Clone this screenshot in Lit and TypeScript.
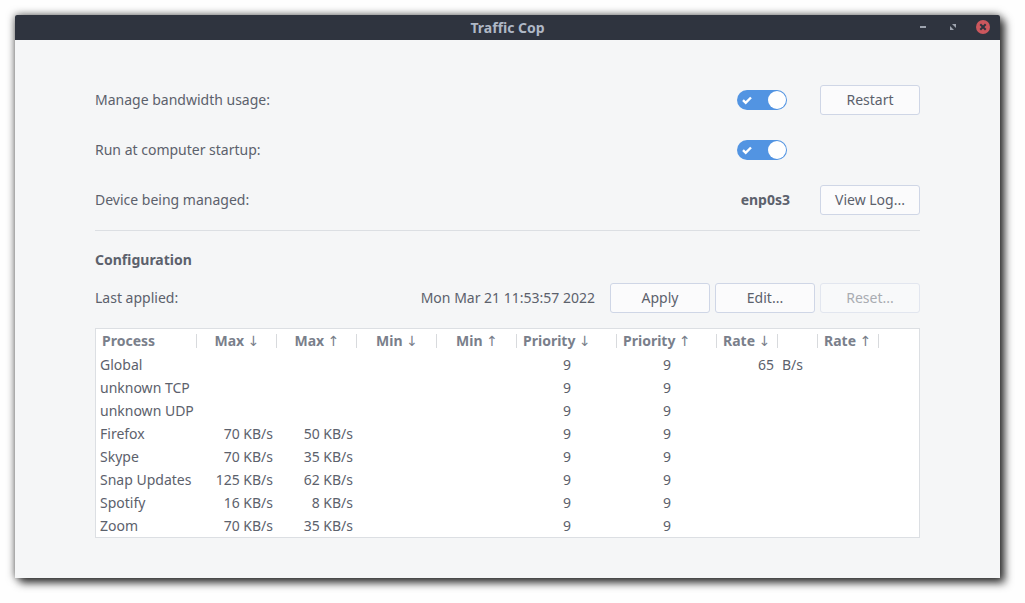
import { LitElement, html, css } from "lit";
import { customElement, property } from "lit/decorators.js";

interface ProcessRow {
  name: string;
  maxDown?: string;
  maxUp?: string;
  minDown?: string;
  minUp?: string;
  priorityDown: number;
  priorityUp: number;
  rateDown?: string;
  rateDownUnit?: string;
  rateUp?: string;
  rateUpUnit?: string;
}

const ROWS: ProcessRow[] = [
  { name: "Global", priorityDown: 9, priorityUp: 9, rateDown: "65", rateDownUnit: "B/s" },
  { name: "unknown TCP", priorityDown: 9, priorityUp: 9 },
  { name: "unknown UDP", priorityDown: 9, priorityUp: 9 },
  { name: "Firefox", maxDown: "70 KB/s", maxUp: "50 KB/s", priorityDown: 9, priorityUp: 9 },
  { name: "Skype", maxDown: "70 KB/s", maxUp: "35 KB/s", priorityDown: 9, priorityUp: 9 },
  { name: "Snap Updates", maxDown: "125 KB/s", maxUp: "62 KB/s", priorityDown: 9, priorityUp: 9 },
  { name: "Spotify", maxDown: "16 KB/s", maxUp: "8 KB/s", priorityDown: 9, priorityUp: 9 },
  { name: "Zoom", maxDown: "70 KB/s", maxUp: "35 KB/s", priorityDown: 9, priorityUp: 9 },
];

const DOWN = html`<span class="arrow">↓</span>`;
const UP = html`<span class="arrow">↑</span>`;

@customElement("title-bar")
export class TitleBar extends LitElement {
  @property() heading = "";

  static styles = css`
    :host {
      display: grid;
      grid-template-columns: 1fr auto 1fr;
      align-items: center;
      box-sizing: border-box;
      height: 25px;
      padding: 0 10px 1px;
      background: #2f343f;
      color: #afb8c6;
      border-radius: 2px 2px 0 0;
    }
    .heading {
      grid-column: 2;
      margin: 0;
      padding-top: 2px;
      font-size: 14px;
      line-height: 20px;
      font-weight: 700;
    }
    .controls {
      display: flex;
      justify-content: flex-end;
      gap: 16px;
    }
    .control {
      display: block;
      width: 14px;
      height: 14px;
      padding: 0;
      border: 0;
      background: none;
    }
    .control svg {
      display: block;
    }
  `;

  render() {
    return html`
      <h1 class="heading">${this.heading}</h1>
      <div class="controls">
        <button class="control" type="button" aria-label="Minimize">
          <svg width="14" height="14" viewBox="0 0 14 14"><path d="M4 6h6v2H4z" fill="#9da3ae" /></svg>
        </button>
        <button class="control" type="button" aria-label="Maximize">
          <svg width="14" height="14" viewBox="0 0 14 14">
            <path d="M6 4h4v4zM4 6l4 4H4z" fill="#9da3ae" />
          </svg>
        </button>
        <button class="control" type="button" aria-label="Close">
          <svg width="14" height="14" viewBox="0 0 14 14">
            <circle cx="7" cy="7" r="7" fill="#cc575d" />
            <path d="M4.3 4.3l5.4 5.4M9.7 4.3l-5.4 5.4" stroke="#2f343f" stroke-width="2" />
          </svg>
        </button>
      </div>
    `;
  }
}

@customElement("process-table")
export class ProcessTable extends LitElement {
  @property({ attribute: false }) rows: ProcessRow[] = [];

  static styles = css`
    :host {
      display: block;
      background: #ffffff;
      border: 1px solid #dcdfe3;
    }
    .grid {
      width: 100%;
      table-layout: fixed;
      border-collapse: collapse;
    }
    .col-name {
      width: 101px;
    }
    .col-limit {
      width: 80px;
    }
    .col-priority {
      width: 100px;
    }
    .col-rate {
      width: 61px;
    }
    .col-unit {
      width: 40px;
    }
    th {
      height: 24px;
      padding: 0 6px;
      font-weight: 700;
      line-height: 20px;
      color: #7a7f8b;
      text-align: center;
      white-space: nowrap;
      background: linear-gradient(#d8dadd, #d8dadd) right center / 1px 14px no-repeat;
    }
    td {
      height: 23px;
      padding: 0 4px;
      line-height: 20px;
      text-align: right;
      white-space: nowrap;
    }
    .arrow {
      font-family: "DejaVu Sans", sans-serif;
      font-weight: 400;
      line-height: 1;
    }
    .start {
      text-align: left;
    }
    .center {
      text-align: center;
    }
    .filler {
      background: none;
    }
  `;

  render() {
    return html`
      <table class="grid">
        <colgroup>
          <col class="col-name" />
          <col class="col-limit" />
          <col class="col-limit" />
          <col class="col-limit" />
          <col class="col-limit" />
          <col class="col-priority" />
          <col class="col-priority" />
          <col class="col-rate" />
          <col class="col-unit" />
          <col class="col-rate" />
          <col />
        </colgroup>
        <thead>
          <tr>
            <th class="start" scope="col">Process</th>
            <th scope="col">Max ${DOWN}</th>
            <th scope="col">Max ${UP}</th>
            <th scope="col">Min ${DOWN}</th>
            <th scope="col">Min ${UP}</th>
            <th class="start" scope="col">Priority ${DOWN}</th>
            <th class="start" scope="col">Priority ${UP}</th>
            <th class="start" scope="col">Rate ${DOWN}</th>
            <th></th>
            <th class="start" scope="col">Rate ${UP}</th>
            <th class="filler"></th>
          </tr>
        </thead>
        <tbody>
          ${this.rows.map(
            (row) => html`
              <tr>
                <td class="start">${row.name}</td>
                <td>${row.maxDown}</td>
                <td>${row.maxUp}</td>
                <td>${row.minDown}</td>
                <td>${row.minUp}</td>
                <td class="center">${row.priorityDown}</td>
                <td class="center">${row.priorityUp}</td>
                <td>${row.rateDown}</td>
                <td class="start">${row.rateDownUnit}</td>
                <td>${row.rateUp}</td>
                <td class="start">${row.rateUpUnit}</td>
              </tr>
            `,
          )}
        </tbody>
      </table>
    `;
  }
}

@customElement("app-root")
export class AppRoot extends LitElement {
  static styles = css`
    :host {
      display: block;
      box-sizing: border-box;
      min-height: 100vh;
      padding: 15px 25px 25px 15px;
      background: #fefefe;
      color: #5c616c;
      font-family: "Noto Sans", "Open Sans", sans-serif;
      font-size: 14px;
      line-height: 20px;
    }
    .window {
      background: #f5f6f7;
      border-radius: 2px 2px 0 0;
      box-shadow:
        5px 5px 8px rgba(0, 0, 0, 0.7),
        0 0 8px rgba(0, 0, 0, 0.6);
    }
    .content {
      padding: 45px 80px 40px;
    }
    .settings {
      display: grid;
      grid-template-columns: 1fr 56px 100px;
      grid-auto-rows: 30px;
      align-items: center;
      gap: 20px 30px;
      padding-bottom: 15px;
      border-bottom: 1px solid #dcdfe3;
    }
    .settings .button {
      grid-column: 3;
    }
    .label {
      grid-column: 1;
    }
    .device {
      justify-self: end;
      font-weight: 700;
    }
    .switch {
      position: relative;
      justify-self: center;
      width: 50px;
      height: 20px;
    }
    .toggle {
      appearance: none;
      display: block;
      width: 50px;
      height: 20px;
      margin: 0;
      border-radius: 10px;
      background: #b8bdc7;
    }
    .toggle::before {
      content: "";
      display: block;
      width: 18px;
      height: 18px;
      margin: 1px;
      border-radius: 50%;
      background: #ffffff;
    }
    .toggle:checked {
      display: flex;
      justify-content: flex-end;
      background: #5294e2;
    }
    .tick {
      position: absolute;
      left: 5px;
      top: 5px;
      pointer-events: none;
    }
    .button {
      box-sizing: border-box;
      width: 100px;
      height: 30px;
      padding: 0;
      border: 1px solid #cfd6e6;
      border-radius: 3px;
      background: #fbfbfc;
      color: inherit;
      font: inherit;
    }
    .button:disabled {
      border-color: #e2e6ef;
      background: #f8f9fa;
      color: #a9acb2;
    }
    .section {
      margin: 14px 0 8px;
      font-size: 14px;
      line-height: 30px;
      font-weight: 700;
    }
    .actions {
      display: flex;
      align-items: center;
      gap: 5px;
      margin-bottom: 15px;
    }
    .applied {
      margin-left: auto;
      margin-right: 10px;
    }
  `;

  private renderSwitch(id: string) {
    return html`
      <span class="switch">
        <input class="toggle" id=${id} type="checkbox" role="switch" checked />
        <svg class="tick" width="10" height="10" viewBox="0 0 10 10">
          <path d="M1 5.2L3.7 7.8L9 2.5" fill="none" stroke="#ffffff" stroke-width="2.4" />
        </svg>
      </span>
    `;
  }

  render() {
    return html`
      <main class="window">
        <title-bar heading="Traffic Cop"></title-bar>
        <div class="content">
          <div class="settings">
            <label class="label" for="manage">Manage bandwidth usage:</label>
            ${this.renderSwitch("manage")}
            <button class="button" type="button">Restart</button>
            <label class="label" for="startup">Run at computer startup:</label>
            ${this.renderSwitch("startup")}
            <span class="label">Device being managed:</span>
            <span class="device">enp0s3</span>
            <button class="button" type="button">View Log...</button>
          </div>
          <h2 class="section">Configuration</h2>
          <div class="actions">
            <span>Last applied:</span>
            <time class="applied" datetime="2022-03-21T11:53:57">Mon Mar 21 11:53:57 2022</time>
            <button class="button" type="button">Apply</button>
            <button class="button" type="button">Edit...</button>
            <button class="button" type="button" disabled>Reset...</button>
          </div>
          <process-table .rows=${ROWS}></process-table>
        </div>
      </main>
    `;
  }
}
